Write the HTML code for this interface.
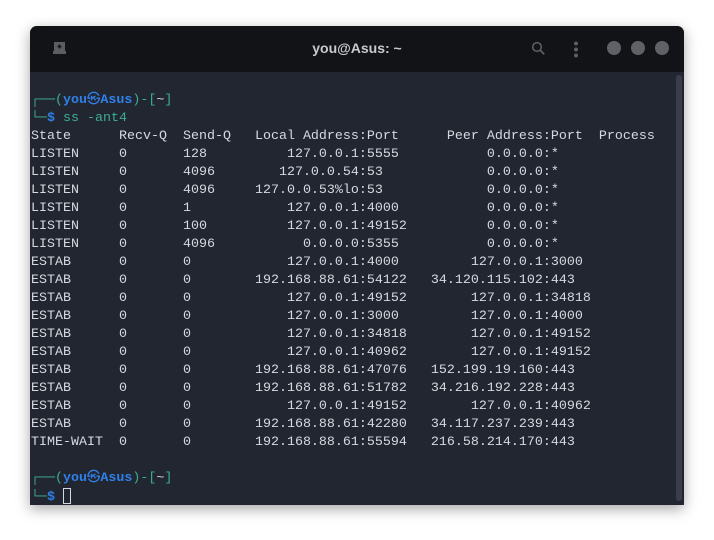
<!DOCTYPE html>
<html><head><meta charset="utf-8"><style>
html,body{margin:0;padding:0;width:714px;height:540px;background:#ffffff;overflow:hidden}
.win{position:absolute;left:30px;top:26px;width:654px;height:479px;background:#222631;border-radius:7px 7px 0 0;box-shadow:0 4px 14px rgba(0,0,0,.35);overflow:hidden}
.tb{position:absolute;left:0;top:0;width:654px;height:46px;background:#121317}
.title{position:absolute;left:0;width:654px;top:14px;text-align:center;color:#c9cacd;font:bold 14px "Liberation Sans",sans-serif}
.dot{position:absolute;top:15px;width:14px;height:14px;border-radius:50%;background:#606166}
.sb{position:absolute;left:646px;top:49px;width:6px;height:426px;border-radius:3px;background:#3a3e4a}
pre{position:absolute;left:1px;top:66px;margin:0;font:13.33px/18px "Liberation Mono","DejaVu Sans Mono","Noto Sans CJK JP",monospace;color:#d6d9df}
.t{color:#3dae95}.b{color:#2f80e8;font-weight:bold}
.cur{display:inline-block;width:8px;height:16px;border:1px solid #d6d9df;box-sizing:border-box;vertical-align:-4px}
</style></head><body>
<div class="win">
 <div class="tb">
  <svg style="position:absolute;left:23px;top:16px" width="13" height="12" viewBox="0 0 13 12"><rect x="1" y="0" width="11" height="9" fill="#5c5d62"/><rect x="0" y="9" width="13" height="3" fill="#5c5d62"/><path d="M6.5 2.5v4M4.5 4.5h4" stroke="#121317" stroke-width="1.4"/></svg>
  <div class="title">you@Asus: ~</div>
  <svg style="position:absolute;left:501px;top:15px" width="15" height="15" viewBox="0 0 15 15"><circle cx="6" cy="6" r="4.3" fill="none" stroke="#5c5d62" stroke-width="1.6"/><path d="M9.2 9.2l4 4" stroke="#5c5d62" stroke-width="1.8"/></svg>
  <svg style="position:absolute;left:543px;top:15px" width="6" height="17"><circle cx="3" cy="2.5" r="2" fill="#5c5d62"/><circle cx="3" cy="8.5" r="2" fill="#5c5d62"/><circle cx="3" cy="14.5" r="2" fill="#5c5d62"/></svg>
  <div class="dot" style="left:577px"></div><div class="dot" style="left:601px"></div><div class="dot" style="left:625px"></div>
 </div>
 <div class="sb"></div>
<pre><span class="t">┌──(</span><span class="b">you㉿Asus</span><span class="t">)-[</span>~<span class="t">]</span>
<span class="t">└─</span><span class="b">$</span> <span class="t">ss -ant4</span>
State      Recv-Q  Send-Q   Local Address:Port      Peer Address:Port  Process
LISTEN     0       128          127.0.0.1:5555           0.0.0.0:*
LISTEN     0       4096        127.0.0.54:53             0.0.0.0:*
LISTEN     0       4096     127.0.0.53%lo:53             0.0.0.0:*
LISTEN     0       1            127.0.0.1:4000           0.0.0.0:*
LISTEN     0       100          127.0.0.1:49152          0.0.0.0:*
LISTEN     0       4096           0.0.0.0:5355           0.0.0.0:*
ESTAB      0       0            127.0.0.1:4000         127.0.0.1:3000
ESTAB      0       0        192.168.88.61:54122   34.120.115.102:443
ESTAB      0       0            127.0.0.1:49152        127.0.0.1:34818
ESTAB      0       0            127.0.0.1:3000         127.0.0.1:4000
ESTAB      0       0            127.0.0.1:34818        127.0.0.1:49152
ESTAB      0       0            127.0.0.1:40962        127.0.0.1:49152
ESTAB      0       0        192.168.88.61:47076   152.199.19.160:443
ESTAB      0       0        192.168.88.61:51782   34.216.192.228:443
ESTAB      0       0            127.0.0.1:49152        127.0.0.1:40962
ESTAB      0       0        192.168.88.61:42280   34.117.237.239:443
TIME-WAIT  0       0        192.168.88.61:55594   216.58.214.170:443

<span class="t">┌──(</span><span class="b">you㉿Asus</span><span class="t">)-[</span>~<span class="t">]</span>
<span class="t">└─</span><span class="b">$</span> <span class="cur"></span></pre>
</div>
</body></html>
